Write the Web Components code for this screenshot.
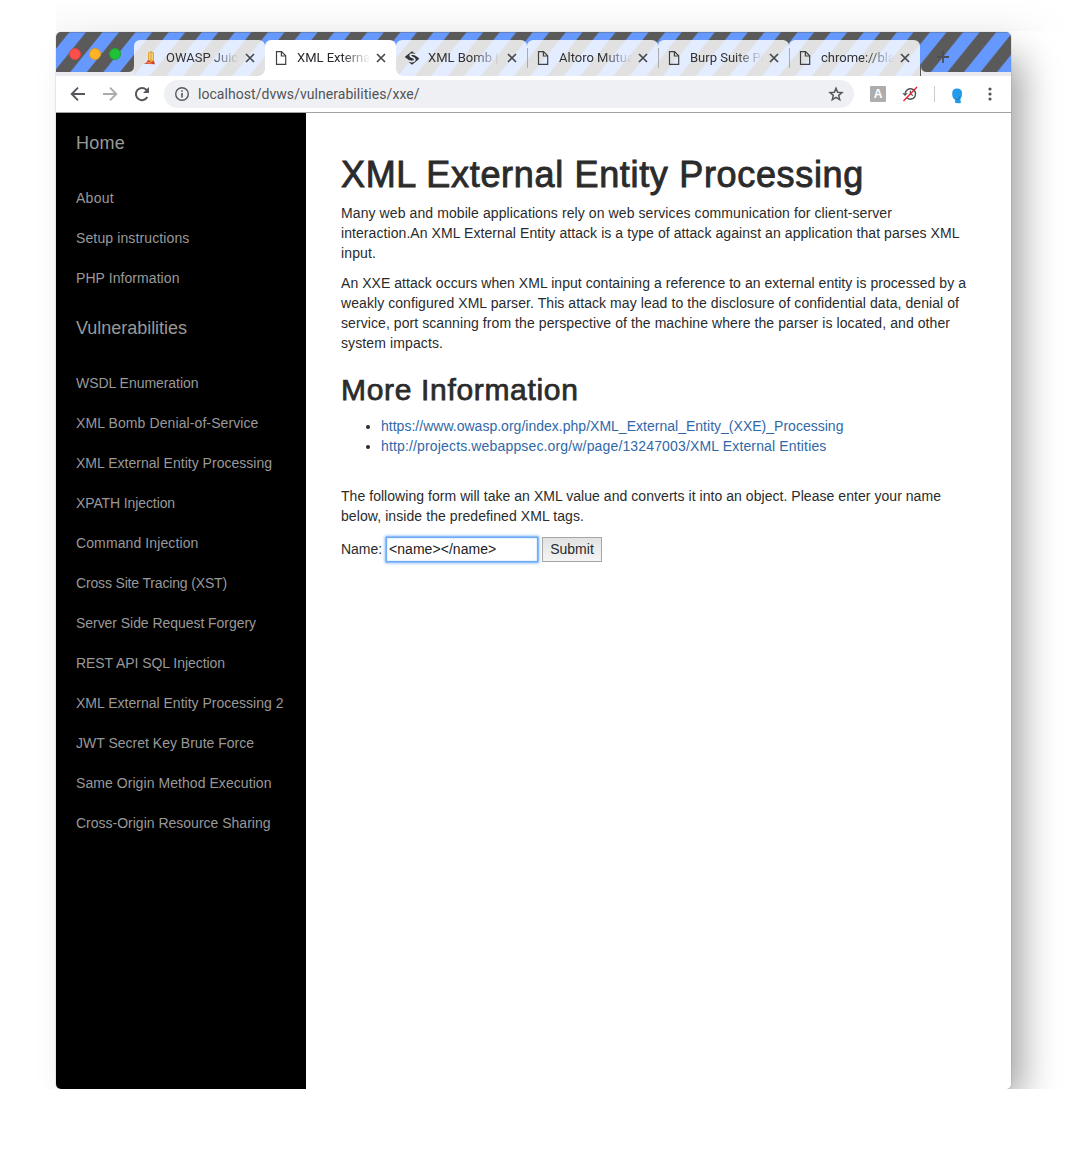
<!DOCTYPE html>
<html lang="en">
<head>
<meta charset="utf-8">
<title>XML External Entity Processing</title>
<style>
html,body{margin:0;background:#fff}
body{width:1067px;height:1169px;overflow:hidden;font-family:"Liberation Sans",Arial,sans-serif}
</style>
</head>
<body>
<browser-window>
  <tab-strip slot="tabs">
    <browser-tab icon="juice">OWASP Juice Shop</browser-tab>
    <browser-tab icon="page" active>XML External Entity</browser-tab>
    <browser-tab icon="swirl">XML Bomb | DVWS</browser-tab>
    <browser-tab icon="page" divider>Altoro Mutual</browser-tab>
    <browser-tab icon="page" divider>Burp Suite Pro</browser-tab>
    <browser-tab icon="page" divider>chrome://blank</browser-tab>
  </tab-strip>
  <tool-bar slot="toolbar">localhost/dvws/vulnerabilities/xxe/</tool-bar>
  <side-nav slot="nav"></side-nav>
  <xxe-page slot="page"></xxe-page>
</browser-window>
<script>
const define=(name,html,setup)=>customElements.define(name,class extends HTMLElement{
  constructor(){super();this.attachShadow({mode:'open'}).innerHTML=html;}
  connectedCallback(){if(setup)setup(this,this.shadowRoot);}
});

const tabIcons={
  page:'<svg width="16" height="16" viewBox="0 0 16 16" fill="none" stroke="#3f4144" stroke-width="1.2"><path d="M3.500 1.600h5l4.200 4.200v8.600H3.500z"/><path d="M8.400 1.800v4.200h4.200"/></svg>',
  juice:'<svg width="16" height="16" viewBox="0 0 16 16"><path d="M1.500 13.800c2.500-.3 3.500-2.300 4.500-4.300l6 1.500 1 3.300z" fill="#d4402b"/><path d="M6 2.800l3-1.800 3 1.600v7.900l-2.700 1.700L6 10z" fill="#e3a53a"/><path d="M7.800 2.700v7M10.200 2.900v7" stroke="#fbe39a"/><path d="M3.500 13l2.500-1.600 4 1.600-1 .8z" fill="#f08a54"/></svg>',
  swirl:'<svg width="16" height="16" viewBox="0 0 16 16"><path d="M1.200 6.500L8 1.300l3.500 2.800C8.500 3 5.500 4 6 6c.5 1.800 4.500 1.500 4.500 3.500 0 1.500-2 2.200-4.500 1.200L1 7.200z" fill="#303638"/><path d="M11.500 5.800L14.800 8v1.200L8 14.700l-3.700-2.900c3.500 1.300 7.400.5 7.400-2.300 0-2.500-4.400-2.600-4.400-4 0-1 2.200-1.200 4.200.3z" fill="#303638"/><path d="M10.500 4.600C8 3.500 5.500 4.300 6.100 5.900c.6 1.600 4.600 1.700 4.500 3.700-.1 1.900-3.600 2.100-5.200 1.300" stroke="#e8ecf4" stroke-width="1.300" fill="none"/></svg>'
};

define('browser-window',`<style>
:host{display:block;box-sizing:border-box;width:1067px;height:1089px;overflow:hidden;padding:32px 0 0 56px;background:linear-gradient(90deg,transparent 945px,#fff) 56px 0/1011px 31px no-repeat,linear-gradient(#fff,#f8f8f8) 56px 0/1011px 31px no-repeat,#fff}
.frame{box-sizing:border-box;width:955px;height:1057px;border-radius:5px;background:#fff;box-shadow:0 0 1px rgba(0,0,0,.65),17px 18px 36px -8px rgba(0,0,0,.4)}
.clip{height:100%;border-radius:5px;overflow:hidden;display:flex;flex-direction:column;background:#fff}
.body{display:flex;flex:1}
</style><div class="frame"><div class="clip"><slot name="tabs"></slot><slot name="toolbar"></slot><div class="body"><slot name="nav"></slot><slot name="page"></slot></div></div></div>`);

define('tab-strip',`<style>
:host{display:block;height:44px;background:#fff;position:relative}
.art{position:absolute;left:0;top:0;width:955px;height:44px}
.row{position:relative;display:flex;height:44px;align-items:flex-end}
.lights{display:flex;gap:8px;width:65px;height:44px;padding-left:13px;align-items:center}
.lights i{box-sizing:border-box;width:12px;height:12px;border-radius:50%;margin-top:0}
.plus{width:22px;height:38px;margin-left:16px;display:flex;align-items:center}
</style>
<svg class="art" viewBox="0 0 955 44"><defs><pattern id="s" width="33.1" height="44" patternUnits="userSpaceOnUse"><rect width="34" height="44" fill="#6699ff"/><path d="M-36.100 0h16.500l-35.500 44h-16.500zM-3 0h16.500L-22 44h-16.500zM30.100 0h16.500L11.100 44H-5.400zM63.200 0h16.500L44.200 44H27.700z" fill="#5a5a5a"/></pattern></defs><rect width="955" height="44" fill="#e9eaf0"/><path d="M0 0H955V40H871Q865 40 865 34V20H78V34Q78 40 72 40H0z" fill="url(#s)"/><path d="M78 0H865V44H78z" fill="url(#s)"/><path d="M0 .5H955" stroke="#555" stroke-opacity=".35"/></svg>
<div class="row"><div class="lights"><i style="background:#ff4f4b;border:1px solid #de4640"></i><i style="background:#ffb427;border:1px solid #e09c24"></i><i style="background:#1fc236;border:1px solid #1ca431"></i></div><slot></slot><div class="plus"><svg width="14" height="14" viewBox="0 0 14 14"><path d="M7 1v12M1 7h12" stroke="#4b4e54" stroke-width="1.800"/></svg></div></div>`);

define('browser-tab',`<style>
:host{position:relative;display:flex;align-items:center;box-sizing:border-box;width:131px;height:36px;padding:0 8px;border-radius:6px 6px 0 0;background:rgba(255,255,255,.82);font:13px Roboto,sans-serif;color:#303236;flex:none}
:host([active]){background:#fff;color:#27292d;z-index:1}
:host([active])::before,:host([active])::after{content:"";position:absolute;bottom:0;width:7px;height:7px}
:host([active])::before{left:-7px;background:radial-gradient(circle at 0 0,transparent 6.500px,#fff 7px)}
:host([active])::after{right:-7px;background:radial-gradient(circle at 100% 0,transparent 6.500px,#fff 7px)}
:host([divider])::before{content:"";position:absolute;left:0;top:8px;width:1px;height:20px;background:#aaa}
.ico{width:16px;height:16px;flex:none}
.title{width:73px;flex:none;margin-left:8px;padding-bottom:1px;overflow:hidden;white-space:nowrap;-webkit-mask-image:linear-gradient(90deg,#000 45px,transparent 73px)}
.close{width:10px;height:10px;margin-left:6px;flex:none}
</style><span class="ico"></span><span class="title"><slot></slot></span><svg class="close" viewBox="0 0 10 10"><path d="M1 1l8 8M9 1L1 9" stroke="#45484d" stroke-width="1.700"/></svg>`,(el,r)=>{r.querySelector('.ico').innerHTML=tabIcons[el.getAttribute('icon')]});

define('tool-bar',`<style>
:host{display:flex;align-items:center;box-sizing:border-box;height:37px;background:#fff;border-bottom:1px solid #a2a2a2;padding:0 13px;font:14px Roboto,sans-serif;color:#515458}
svg{flex:none;display:block}
.omni{display:flex;align-items:center;width:690px;height:28px;margin-left:13px;border-radius:14px;background:#eff0f3;box-sizing:border-box;padding:0 10px}
.url{margin-left:8px;flex:1;letter-spacing:.05px}
.a{width:16px;height:16px;background:#adadad;color:#fff;border-radius:1px;font:bold 12px/16px "Liberation Sans",sans-serif;text-align:center;margin-left:16px}
.sep{width:1px;height:16px;background:#ccc;margin:0 15px 0 15px}
</style>
<svg width="18" height="18" viewBox="0 0 18 18" fill="none" stroke="#54575b" stroke-width="1.900"><path d="M16 9H3M9 2.700L2.700 9 9 15.300"/></svg>
<svg width="18" height="18" viewBox="0 0 18 18" fill="none" stroke="#aaabad" stroke-width="1.900" style="margin-left:14px"><path d="M2 9h13M9 2.700L15.300 9 9 15.300"/></svg>
<svg width="18" height="18" viewBox="0 0 18 18" style="margin-left:14px"><path d="M14.300 12.100A6.100 6.100 0 1 1 13.300 4.700L15 6.500" fill="none" stroke="#54575b" stroke-width="2"/><path d="M16 2v6h-6z" fill="#54575b"/></svg>
<div class="omni"><svg width="16" height="16" viewBox="0 0 16 16"><circle cx="8" cy="8" r="6.300" fill="none" stroke="#54575b" stroke-width="1.400"/><path d="M8 7v4.500M8 4.300v1.500" stroke="#54575b" stroke-width="1.600"/></svg><span class="url"><slot></slot></span><svg width="16" height="16" viewBox="0 0 16 16"><path d="M8 2.200l1.650 4 4.350.4-3.300 2.800 1 4.300L8 11.400l-3.700 2.300 1-4.300L2 6.600l4.350-.4z" fill="none" stroke="#54575b" stroke-width="1.500"/></svg></div>
<span class="a">A</span>
<svg width="18" height="16" viewBox="0 0 18 16" style="margin-left:15px"><path d="M4.200 7.500a5.200 5.200 0 1 1 1.600 4.200" fill="none" stroke="#505357" stroke-width="1.500"/><path d="M1.200 7.200h5.600L4 10z" fill="#505357"/><path d="M9.400 4.800V8l2.600 1.600" fill="none" stroke="#505357" stroke-width="1.200"/><path d="M2.500 15L16 1" stroke="#f01824" stroke-width="1.300"/></svg>
<span class="sep"></span>
<svg width="14" height="18" viewBox="0 0 14 18" style="margin-top:4px"><path d="M7 1.500c3.500 0 5 1.500 5 4.500 0 2.700-.5 5-1.700 6.200l.7 3.500c-2 .9-4.600.8-6.200-.2l.6-2.800C3 12 2.200 9.800 2.200 6.500c0-3.500 1.700-5 4.800-5z" fill="#249be9"/><path d="M5.500 12.500c1.500.4 2.400 0 3.400-1l1-2" stroke="#136fb4" fill="none"/></svg>
<svg width="16" height="16" viewBox="0 0 16 16" fill="#505357" style="margin-left:18px"><circle cx="8" cy="3" r="1.600"/><circle cx="8" cy="8" r="1.600"/><circle cx="8" cy="13" r="1.600"/></svg>`);

define('side-nav',`<style>
:host{display:block;box-sizing:border-box;width:250px;background:#000;color:#999;padding-left:20px;font:14px/40px "Liberation Sans",sans-serif}
div{height:40px;white-space:nowrap}
.big{font-size:18px;line-height:60px;height:65px}
div span{display:inline-block}
</style><nav></nav>`,(el,r)=>{
  const rows=[['Home',49,1],['About',38],['Setup instructions',113.5],['PHP Information',103.5],['Vulnerabilities',111,1],['WSDL Enumeration',122.500],['XML Bomb Denial-of-Service',182.500],['XML External Entity Processing',196],['XPATH Injection',99],['Command Injection',122.500],['Cross Site Tracing (XST)',151],['Server Side Request Forgery',180],['REST API SQL Injection',149],['XML External Entity Processing 2',207.500],['JWT Secret Key Brute Force',178],['Same Origin Method Execution',195.500],['Cross-Origin Resource Sharing',194.500]];
  r.querySelector('nav').innerHTML=rows.map(([t,w,b])=>`<div class="${b?'big':''}"><span data-w="${w}">${t}</span></div>`).join('');
  fit(r);
});

function fit(root){
  root.querySelectorAll('[data-w]').forEach(s=>{
    const n=s.textContent.length;
    const range=document.createRange();range.selectNodeContents(s);
    const w=range.getBoundingClientRect().width;
    s.style.letterSpacing=((+s.dataset.w-w)/n).toFixed(3)+'px';
  });
}

define('xxe-page',`<style>
:host{display:block;box-sizing:border-box;flex:1;padding:42px 0 0 35px;color:#292b2c;font:14px/20px "Liberation Sans",sans-serif;white-space:nowrap}
h1,h2{font-weight:400;margin:0;color:#2b2b2b;-webkit-text-stroke:.9px #2b2b2b}
h1{font-size:36px;line-height:40px;margin-bottom:8px}
h2{font-size:30px;line-height:33px;margin:20px 0 10px;-webkit-text-stroke-width:.75px}
p{margin:0 0 10px}
p span{display:inline-block}
ul{margin:0 0 30px;padding-left:40px}
a{color:#3168a8}
.form{display:flex;align-items:center;height:26px}
input{box-sizing:border-box;width:150px;height:23px;margin:0 5px 0 5px;border:0;outline:0;padding:1px 2px;font:14px "Liberation Sans",sans-serif;color:#222;box-shadow:0 0 0 1.500px #6fabf5,0 0 3px 2px #7ab2f7,inset 0 0 2px #a8cdfa;letter-spacing:.05px}
button{box-sizing:border-box;width:60px;height:25px;padding:0;border:1px solid #a6a6a6;border-radius:0;background:linear-gradient(#e2e2e2,#f4f4f4);font:14px "Liberation Sans",sans-serif;color:#292b2c}
</style>
<h1><span data-w="523">XML External Entity Processing</span></h1>
<p><span data-w="551">Many web and mobile applications rely on web services communication for client-server</span><br><span data-w="618.500">interaction.An XML External Entity attack is a type of attack against an application that parses XML</span><br><span data-w="35">input.</span></p>
<p><span data-w="625">An XXE attack occurs when XML input containing a reference to an external entity is processed by a</span><br><span data-w="618">weakly configured XML parser. This attack may lead to the disclosure of confidential data, denial of</span><br><span data-w="609">service, port scanning from the perspective of the machine where the parser is located, and other</span><br><span data-w="102">system impacts.</span></p>
<h2><span data-w="237.500">More Information</span></h2>
<ul><li><a data-w="462.500">https://www.owasp.org/index.php/XML_External_Entity_(XXE)_Processing</a></li><li><a data-w="445.500">http://projects.webappsec.org/w/page/13247003/XML External Entities</a></li></ul>
<p><span data-w="600">The following form will take an XML value and converts it into an object. Please enter your name</span><br><span data-w="243">below, inside the predefined XML tags.</span></p>
<div class="form"><span data-w="41">Name:</span><input value="&lt;name&gt;&lt;/name&gt;"><button>Submit</button></div>`,(el,r)=>fit(r));
</script>
</body>
</html>
